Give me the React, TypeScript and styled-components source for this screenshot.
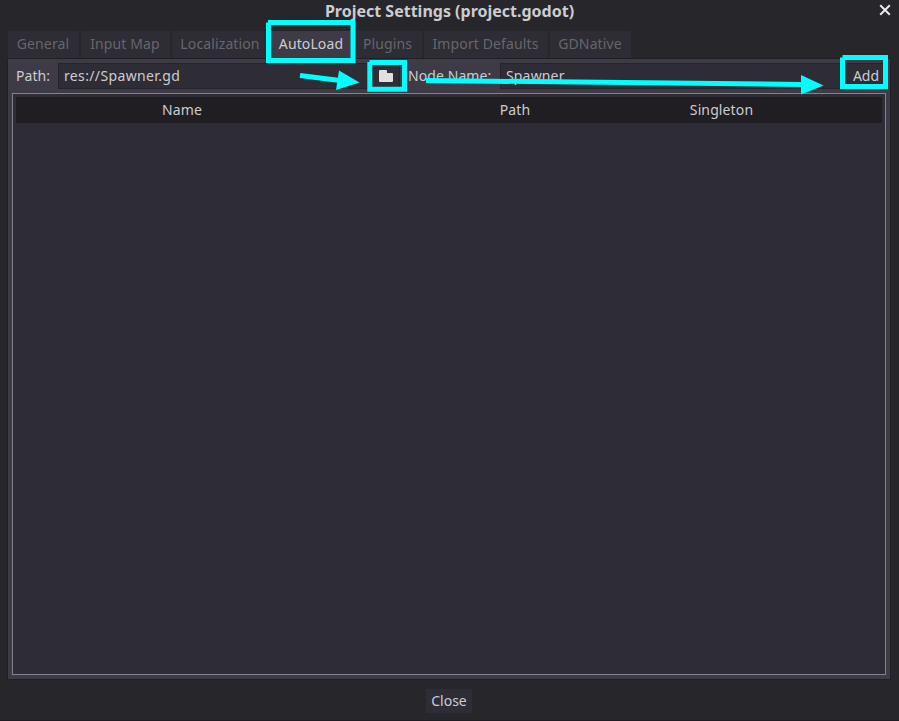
import React from "react";
import styled, { createGlobalStyle } from "styled-components";

const GlobalStyle = createGlobalStyle`
  * { box-sizing: border-box; }
  body {
    margin: 0;
    overflow: hidden;
    background: #27262b;
    color: #cdcccf;
    font: 14px/20px "Noto Sans", sans-serif;
    white-space: nowrap;
  }
`;

const Dialog = styled.main`
  position: relative;
  width: 899px;
  height: 721px;
  display: flex;
  flex-direction: column;
  padding: 0 8px 0 7px;
  background: #27262b;
  border-bottom: 1px solid #201c23;
`;

const TitleBar = styled.header`
  height: 31px;
  flex: none;
  display: flex;
  justify-content: center;
  padding: 1px 0 0 1px;
`;

const Title = styled.h1`
  margin: 0;
  font-size: 16px;
  line-height: 20px;
  font-weight: 700;
`;

const CloseIcon = styled.svg`
  position: absolute;
  left: 879px;
  top: 4px;
`;

const TabBar = styled.nav`
  display: flex;
  flex: none;
  height: 27px;
  gap: 2px;
  padding-left: 1px;
`;

const Tab = styled.button<{ $width: number; $active?: boolean }>`
  width: ${(p) => p.$width}px;
  flex: none;
  padding: 0 1px 2px 0;
  border: 0;
  font: inherit;
  line-height: 25px;
  letter-spacing: 0.12px;
  text-align: center;
  background: ${(p) => (p.$active ? "#3e3b46" : "#2e2c35")};
  color: ${(p) => (p.$active ? "#cdcccf" : "#67666b")};
`;

const Panel = styled.section`
  width: 884px;
  height: 622px;
  flex: none;
  padding: 4px;
  display: flex;
  flex-direction: column;
  gap: 4px;
  background: #3e3b46;
  border: 1px solid #201f24;
`;

const FormRow = styled.div`
  height: 26px;
  display: flex;
  flex: none;
`;

const Label = styled.label<{ $width: number; $inset: number }>`
  width: ${(p) => p.$width}px;
  flex: none;
  padding-left: ${(p) => p.$inset}px;
  line-height: 26px;
  letter-spacing: 0.08px;
`;

const Field = styled.div<{ $width: number; $tracking: number }>`
  width: ${(p) => p.$width}px;
  flex: none;
  padding-left: 5px;
  line-height: 24px;
  letter-spacing: ${(p) => p.$tracking}px;
  background: #2e2c35;
  border: 1px solid #25242a;
`;

const SmallButton = styled.button<{ $width: number }>`
  width: ${(p) => p.$width}px;
  flex: none;
  display: flex;
  align-items: center;
  justify-content: center;
  margin-left: 4px;
  padding: 0;
  font: inherit;
  color: inherit;
  background: #2e2c35;
  border: 1px solid #25242a;
`;

const AddButton = styled(SmallButton)`
  padding-left: 1px;
`;

const Tree = styled.div`
  width: 874px;
  height: 582px;
  padding: 3px;
  background: #2e2c35;
  border: 1px solid #84828a;
`;

const TreeHeader = styled.div`
  display: grid;
  grid-template-columns: 332px 334px 79px 121px;
  height: 26px;
  line-height: 26px;
  text-align: center;
  letter-spacing: 0.12px;
  background: #201e23;
`;

const Footer = styled.footer`
  display: flex;
  justify-content: center;
  padding-top: 9px;
`;

const CloseButton = styled.button`
  width: 46px;
  height: 24px;
  padding: 0 0 0 1px;
  border: 0;
  margin-right: 1px;
  font: inherit;
  color: inherit;
  background: #2e2c35;
`;

const Annotations = styled.svg`
  position: absolute;
  inset: 0;
  pointer-events: none;
`;

const tabs = [
  { name: "General", width: 71 },
  { name: "Input Map", width: 89 },
  { name: "Localization", width: 97 },
  { name: "AutoLoad", width: 81, active: true },
  { name: "Plugins", width: 68 },
  { name: "Import Defaults", width: 124 },
  { name: "GDNative", width: 81 },
];

export default function App() {
  return (
    <>
      <GlobalStyle />
      <Dialog>
        <TitleBar>
          <Title>Project Settings (project.godot)</Title>
          <CloseIcon width="12" height="12" viewBox="0 0 12 12">
            <path d="M1.2 1.2 10.8 10.8M10.8 1.2 1.2 10.8" stroke="#e9e9ea" strokeWidth="2" />
          </CloseIcon>
        </TitleBar>
        <TabBar>
          {tabs.map((t) => (
            <Tab key={t.name} $width={t.width} $active={t.active}>{t.name}</Tab>
          ))}
        </TabBar>
        <Panel>
          <FormRow>
            <Label $width={46} $inset={4}>Path:</Label>
            <Field $width={310} $tracking={0.36}>res://Spawner.gd</Field>
            <SmallButton $width={28} aria-label="Browse">
              <svg width="14" height="12" viewBox="0 0 14 12">
                <path d="M0 1Q0 0 1 0H7Q8 0 8 1V3H13Q14 3 14 4V11Q14 12 13 12H1Q0 12 0 11Z" fill="#e0e0e0" />
              </svg>
            </SmallButton>
            <Label $width={100} $inset={8}>Node Name:</Label>
            <Field $width={342} $tracking={0.16}>Spawner</Field>
            <AddButton $width={39}>Add</AddButton>
          </FormRow>
          <Tree>
            <TreeHeader>
              <span>Name</span>
              <span>Path</span>
              <span>Singleton</span>
            </TreeHeader>
          </Tree>
        </Panel>
        <Footer>
          <CloseButton>Close</CloseButton>
        </Footer>
        <Annotations width="899" height="721" viewBox="0 0 899 721">
          <g fill="none" stroke="#00ffff" strokeWidth="5">
            <path d="M268.5 22.5V60.5H353V22.5H268" />
            <path d="M369.8 62V89.2H404.5V62.5H369.5" />
            <path d="M842.5 57.5V86.5H885.5V57.5H842.5" />
            <path d="M300 75.5 340 80.5M426 80.5 804 84.5" />
          </g>
          <path d="M339 70.5 359.5 82.5 336 90ZM801 75 823.5 85.5 801 94.5Z" fill="#00ffff" />
        </Annotations>
      </Dialog>
    </>
  );
}
